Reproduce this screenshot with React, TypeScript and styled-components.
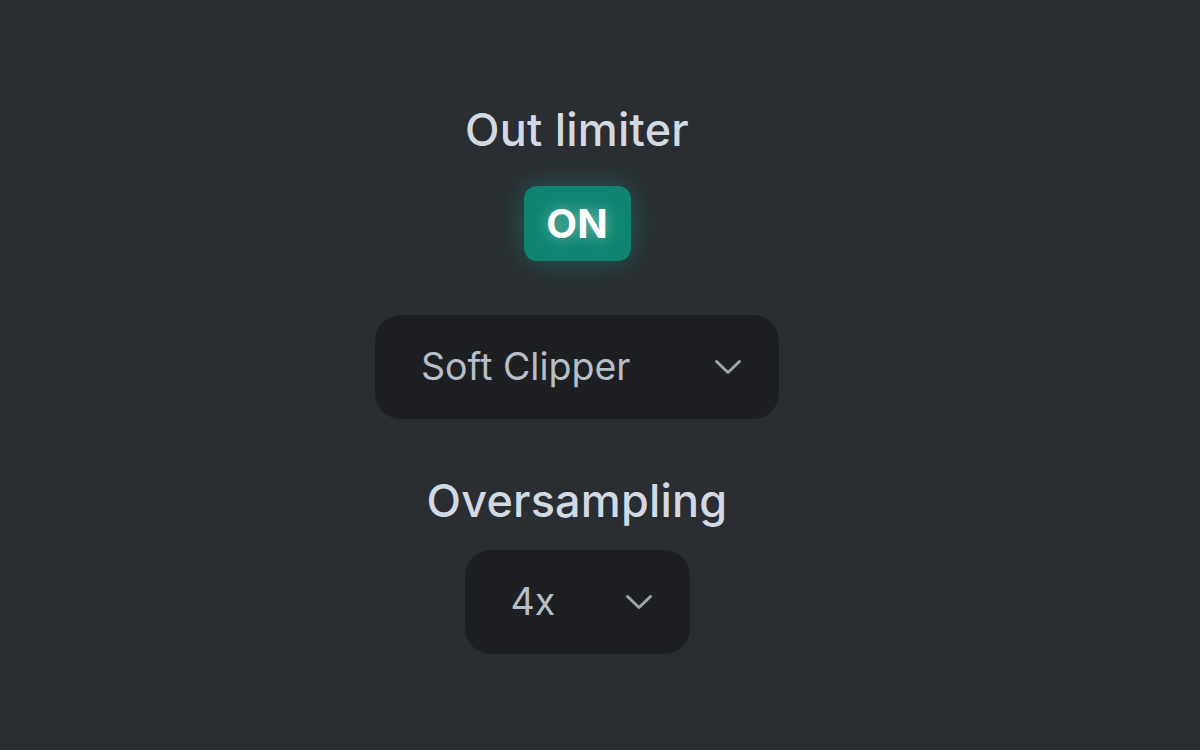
import styled, { createGlobalStyle } from "styled-components";

const GlobalStyle = createGlobalStyle`
  html, body {
    margin: 0;
    padding: 0;
    background: #2a2d31;
    font-family: Inter, "Noto Sans", sans-serif;
  }
`;

const Page = styled.div`
  width: 1200px;
  height: 750px;
  box-sizing: border-box;
  padding: 6px 46px 0 0;
  display: flex;
  flex-direction: column;
  align-items: center;
  justify-content: center;
`;

const Label = styled.div<{ $gap: number }>`
  color: #d3d9e2;
  font-size: 45px;
  font-weight: 500;
  letter-spacing: 0.2px;
  line-height: 53px;
  margin-bottom: ${(p) => p.$gap}px;
`;

const Toggle = styled.button`
  width: 107px;
  height: 75px;
  border: none;
  border-radius: 13px;
  background: #0e8471;
  color: #ffffff;
  font-family: Inter, "Noto Sans", sans-serif;
  font-size: 40px;
  font-weight: 700;
  padding: 0;
  box-shadow: 0 0 30px rgba(18, 165, 140, 0.42);
  margin-bottom: 54px;
  text-shadow: 0 0 14px rgba(255, 255, 255, 0.45);
`;

const Select = styled.div<{ $width: number; $gap: number }>`
  width: ${(p) => p.$width}px;
  height: 104px;
  box-sizing: border-box;
  padding: 0 37px 0 46px;
  border-radius: 26px;
  background: #1e1f22;
  display: flex;
  align-items: center;
  justify-content: space-between;
  margin-bottom: ${(p) => p.$gap}px;
`;

const Value = styled.span`
  color: #b6bec8;
  font-size: 37.5px;
  font-weight: 400;
`;

const Chevron = () => (
  <svg width="28" height="16" viewBox="0 0 28 16" fill="none" stroke="#9ba3ad" strokeWidth="3" strokeLinecap="round" strokeLinejoin="round">
    <path d="M2.5 2.5L14 13.5L25.5 2.5" />
  </svg>
);

export default function App() {
  return (
    <>
      <GlobalStyle />
      <Page>
        <Label $gap={30}>Out limiter</Label>
        <Toggle>ON</Toggle>
        <Select $width={404} $gap={55}>
          <Value>Soft Clipper</Value>
          <Chevron />
        </Select>
        <Label $gap={23}>Oversampling</Label>
        <Select $width={225} $gap={0}>
          <Value>4x</Value>
          <Chevron />
        </Select>
      </Page>
    </>
  );
}
